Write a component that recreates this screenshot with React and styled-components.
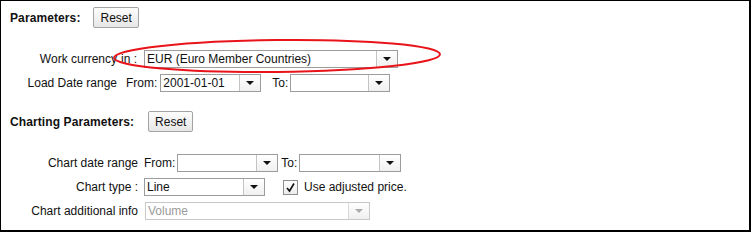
import React from 'react'
import styled, { createGlobalStyle } from 'styled-components'

const GlobalStyle = createGlobalStyle`
  body {
    margin: 0;
    background: #fff;
    font-family: "Liberation Sans", Arial, sans-serif;
    font-size: 12px;
    color: #111;
  }
`

const Frame = styled.div`
  position: relative;
  box-sizing: border-box;
  width: 751px;
  height: 232px;
  border: 1px solid #000;
  border-right-width: 2px;
  border-bottom-width: 2px;
  padding-top: 6px;
`

const Header = styled.div`
  display: flex;
  align-items: center;
  gap: ${p => p.$gap || 13}px;
  padding-left: 9px;
  margin-top: ${p => p.$top || 0}px;
`

const Title = styled.span`
  font-weight: bold;
  letter-spacing: 0.1px;
`

const Button = styled.button`
  box-sizing: border-box;
  height: 21px;
  padding: 0 6px;
  font-family: inherit;
  font-size: 12px;
  color: #111;
  border: 1px solid #a3a3a3;
  border-radius: 2px;
  background: linear-gradient(#fdfdfd, #e6e6e6);
`

const Grid = styled.div`
  display: grid;
  grid-template-columns: ${p => p.$label}px auto;
  grid-auto-rows: 24px;
  column-gap: ${p => p.$gap}px;
  align-items: center;
  margin-top: ${p => p.$top}px;
`

const Label = styled.span`
  justify-self: end;
  white-space: nowrap;
`

const Cell = styled.div`
  display: flex;
  align-items: center;
  padding-left: ${p => p.$indent || 0}px;
`

const Text = styled.span`
  margin-right: ${p => p.$after || 3}px;
  margin-left: ${p => p.$before || 0}px;
  white-space: nowrap;
`

const SelectBox = styled.div`
  box-sizing: border-box;
  display: flex;
  width: ${p => p.$w}px;
  height: 18px;
  border: 1px solid ${p => (p.$disabled ? '#c8c8c8' : '#9c9c9c')};
  background: #fff;
  color: ${p => (p.$disabled ? '#9a9a9a' : '#111')};
`

const SelectValue = styled.span`
  flex: 1;
  padding-left: 2px;
  line-height: 16px;
  overflow: hidden;
  white-space: nowrap;
`

const ArrowCell = styled.span`
  width: 20px;
  display: flex;
  align-items: center;
  justify-content: center;
  border-left: 1px solid ${p => (p.$disabled ? '#dadada' : '#c4c4c4')};
  background: linear-gradient(#ffffff, #f0f0f0);
`

const Arrow = styled.span`
  width: 0;
  height: 0;
  border-left: 4px solid transparent;
  border-right: 4px solid transparent;
  border-top: 4px solid ${p => (p.$disabled ? '#aaa' : '#111')};
`

const Check = styled.span`
  box-sizing: border-box;
  width: 15px;
  height: 15px;
  margin-left: 18px;
  margin-right: 6px;
  border: 1px solid #8f8f8f;
  background: linear-gradient(#fff, #ececec);
  display: flex;
  align-items: center;
  justify-content: center;
`

const Overlay = styled.svg`
  position: absolute;
  left: 110px;
  top: 37px;
  overflow: visible;
`

const Select = ({ w, value, disabled }) => (
  <SelectBox $w={w} $disabled={disabled}>
    <SelectValue>{value}</SelectValue>
    <ArrowCell $disabled={disabled}>
      <Arrow $disabled={disabled} />
    </ArrowCell>
  </SelectBox>
)

export default function App() {
  return (
    <>
      <GlobalStyle />
      <Frame>
        <Header>
          <Title>Parameters:</Title>
          <Button>Reset</Button>
        </Header>

        <Grid $label={116} $gap={4} $top={19}>
          <Label>Work currency</Label>
          <Cell>
            <Text $after={7}>in :</Text>
            <Select w={254} value="EUR (Euro Member Countries)" />
          </Cell>
          <Label>Load Date range</Label>
          <Cell $indent={5}>
            <Text>From:</Text>
            <Select w={101} value="2001-01-01" />
            <Text $before={11} $after={2}>To:</Text>
            <Select w={100} value="" />
          </Cell>
        </Grid>

        <Header $top={16} $gap={14}>
          <Title>Charting Parameters:</Title>
          <Button>Reset</Button>
        </Header>

        <Grid $label={137} $gap={6} $top={19}>
          <Label>Chart date range</Label>
          <Cell>
            <Text $after={2}>From:</Text>
            <Select w={101} value="" />
            <Text $before={3} $after={2}>To:</Text>
            <Select w={102} value="" />
          </Cell>
          <Label>Chart type :</Label>
          <Cell>
            <Select w={121} value="Line" />
            <Check>
              <svg width="11" height="11" viewBox="0 0 11 11">
                <path d="M2 6 L4.5 9 L9 1.5" fill="none" stroke="#111" strokeWidth="1.6" />
              </svg>
            </Check>
            <Text>Use adjusted price.</Text>
          </Cell>
          <Label>Chart additional info</Label>
          <Cell $indent={1}>
            <Select w={225} value="Volume" disabled />
          </Cell>
        </Grid>

        <Overlay width="332" height="36" viewBox="0 0 332 36">
          <ellipse cx="166" cy="18" rx="163" ry="16" fill="none" stroke="#e8141a" strokeWidth="2" transform="rotate(-0.6 166 18)" />
        </Overlay>
      </Frame>
    </>
  )
}
